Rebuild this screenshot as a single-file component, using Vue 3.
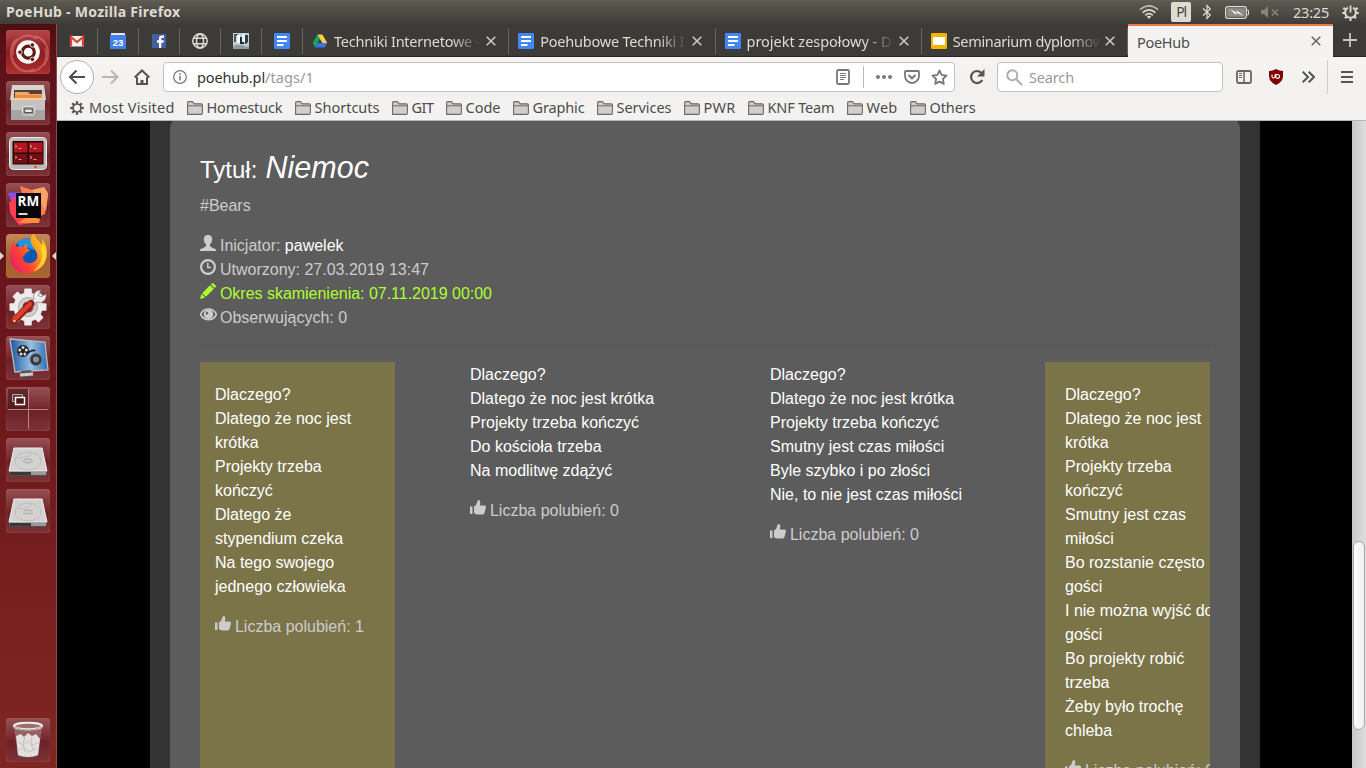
<script setup>
// Spreads a label's letters so that it takes the given width.
const vFit = {
  mounted(el, { value }) {
    const width = el.getBoundingClientRect().width
    el.style.letterSpacing = (value - width) / el.textContent.length + 'px'
  },
}

const pinned = ['gmail', 'calendar', 'facebook', 'globe', 'photo', 'docs']
const tabs = [
  { icon: 'drive', title: 'Techniki Internetowe -', width: 146 },
  { icon: 'docs', title: 'Poehubowe Techniki I', width: 144 },
  { icon: 'docs', title: 'projekt zespołowy - D', width: 145 },
  { icon: 'slides', title: 'Seminarium dyplomow', width: 151 },
]
const bookmarks = [
  { name: 'Homestuck', width: 76 },
  { name: 'Shortcuts', width: 65 },
  { name: 'GIT', width: 22 },
  { name: 'Code', width: 35 },
  { name: 'Graphic', width: 52 },
  { name: 'Services', width: 55 },
  { name: 'PWR', width: 32 },
  { name: 'KNF Team', width: 67 },
  { name: 'Web', width: 31 },
  { name: 'Others', width: 46 },
]
const launcher = ['dash', 'files', 'terminal', 'rubymine', 'firefox', 'settings', 'display', 'workspaces', 'disk', 'disk']
const poems = [
  {
    kind: 'first',
    lines: ['Dlaczego?', 'Dlatego że noc jest', 'krótka', 'Projekty trzeba', 'kończyć', 'Dlatego że', 'stypendium czeka', 'Na tego swojego', 'jednego człowieka'],
    likes: 1,
  },
  {
    kind: 'second',
    lines: ['Dlaczego?', 'Dlatego że noc jest krótka', 'Projekty trzeba kończyć', 'Do kościoła trzeba', 'Na modlitwę zdążyć'],
    likes: 0,
  },
  {
    kind: 'third',
    lines: ['Dlaczego?', 'Dlatego że noc jest krótka', 'Projekty trzeba kończyć', 'Smutny jest czas miłości', 'Byle szybko i po złości', 'Nie, to nie jest czas miłości'],
    likes: 0,
  },
  {
    kind: 'fourth',
    lines: ['Dlaczego?', 'Dlatego że noc jest', 'krótka', 'Projekty trzeba', 'kończyć', 'Smutny jest czas', 'miłości', 'Bo rozstanie często', 'gości', 'I nie można wyjść do', 'gości', 'Bo projekty robić', 'trzeba', 'Żeby było trochę', 'chleba'],
    likes: 0,
  },
]
const angles = [0, 45, 90, 135, 180, 225, 270, 315]
</script>

<template>
  <div class="desktop">
    <header class="panel">
      <b v-fit="174.5" class="window-title">PoeHub - Mozilla Firefox</b>
      <div class="indicators">
        <svg class="wifi" width="20" height="16" viewBox="0 0 20 16" fill="none" stroke="#dfdbd2" stroke-width="1.7">
          <path d="M1 5.6Q10-1.8 19 5.6" opacity=".75" /><path d="M3.6 8.6Q10 3 16.4 8.6" /><path d="M6.2 11.4Q10 8 13.8 11.4" />
          <path d="M7.8 12.5Q10 11 12.2 12.5L10 15z" fill="#dfdbd2" stroke="none" />
        </svg>
        <span class="layout"><span v-fit="9.5">Pl</span></span>
        <svg class="bluetooth" width="10" height="16" viewBox="0 0 10 16" fill="none" stroke="#dfdbd2" stroke-width="1.2"><path d="M1 4.5L8.3 11 5 14.5V1.5L8.3 5 1 11.5" /></svg>
        <svg class="battery" width="24" height="13" viewBox="0 0 24 13">
          <rect x=".7" y=".7" width="20.6" height="11.6" rx="1.8" fill="none" stroke="#dfdbd2" stroke-width="1.3" />
          <rect x="2.2" y="2.2" width="17.6" height="8.6" fill="#8f8d86" /><path d="M22 4.2h1.5v4.6H22" fill="none" stroke="#dfdbd2" />
          <path d="M5 3l6.5 3.8.5-2.2 6.5 5.4-7-3.3-.8 2z" fill="#fff" />
        </svg>
        <svg class="volume" width="18" height="12" viewBox="0 0 18 12"><path d="M0 4h3l4-4v12L3 8H0z" fill="#85837b" /><path d="M11 3.5l6 6m0-6l-6 6" stroke="#85837b" stroke-width="1.5" /></svg>
        <span v-fit="36" class="clock">23:25</span>
        <svg class="power" width="17" height="17" viewBox="0 0 17 17" fill="none" stroke="#dfdbd2">
          <path d="M5.9 3.6A5.4 5.4 0 1 0 11.1 3.6" stroke-width="2" /><path d="M8.5 1.5v7" stroke-width="1.8" />
          <path d="M3 5.5L1.4 3.8M14 5.5l1.6-1.7M3 9H.3M14 9h2.7M4.6 12.5L3 14.4M12.4 12.5l1.6 1.9M8.5 14.5v2.4" stroke-width="2" />
        </svg>
      </div>
    </header>

    <div class="workspace">
      <nav class="launcher">
        <div v-for="(app, i) in launcher" :key="i" class="tile" :class="app">
          <svg v-if="app === 'dash'" width="44" height="44" viewBox="0 0 44 44" fill="none">
            <path d="M7 25C5 10 20 0 31 9M14 39C3 31 2 16 11 9M28 39C16 47 1 33 6 19M39 19c5 13-6 24-17 22M29 6c14 4 16 19 9 29" stroke="#ffb3a8" stroke-opacity=".35" stroke-width="2" />
            <circle cx="22" cy="22" r="11.8" fill="#fff" /><circle cx="22.3" cy="22.2" r="6" stroke="#5e1715" stroke-width="3.2" />
            <g fill="#5e1715" stroke="#fff" stroke-width=".8"><circle cx="14" cy="22.2" r="2.2" /><circle cx="26.4" cy="15" r="2.2" /><circle cx="26.4" cy="29.4" r="2.2" /></g>
          </svg>
          <svg v-else-if="app === 'files'" width="44" height="44" viewBox="0 0 44 44">
            <path d="M6 4h32l2 15H4z" fill="#d5d3d0" /><path d="M8 9h28v11H8z" fill="#5c4036" /><path d="M9 11h13l2 2h12v7H9z" fill="#f0a868" /><path d="M9 14h27v5H9z" fill="#ed8c3a" /><path d="M7 18h30" stroke="#f5cda2" stroke-width="2" />
            <path d="M5 19h34v20H5z" fill="#a6a4a1" /><path d="M5 19h34v10H5z" fill="#c5c3c0" /><rect x="16.5" y="25.5" width="12" height="8.500" rx="1.5" fill="#999" stroke="#e3e3e3" /><rect x="18.800" y="28" width="7.400" height="3.500" fill="#eee" stroke="#555" />
          </svg>
          <svg v-else-if="app === 'terminal'" width="44" height="44" viewBox="0 0 44 44">
            <rect x="3.500" y="5.500" width="37" height="32" rx="4" fill="#bbb9b6" stroke="#eee" /><rect x="6.500" y="9" width="31" height="23.500" rx="1" fill="#250505" />
            <path d="M8 10.500h13.500v10H8zM23 10.500h13.500v10H23z" fill="#b31620" /><path d="M8 22h13.500v9.500H8zM23 22h13.500v9.500H23z" fill="#741014" />
            <path d="M9 13l2 1.500-2 1m3.500 1h3M24 13l2 1.500-2 1m3.500 1h3M9 24l2 1.500-2 1m3.500 1h3M24 24l2 1.500-2 1m3.500 1h3" stroke="#ffb8b8" stroke-width=".8" fill="none" /><circle cx="29.500" cy="35" r="1.200" fill="#f33" />
          </svg>
          <svg v-else-if="app === 'rubymine'" width="44" height="44" viewBox="0 0 44 44">
            <path d="M14 3l12 4 12-3 4 9-3 18-16 7z" fill="#ff7e4a" /><path d="M26 7l12-3 4 6-2 18z" fill="#fda06a" /><path d="M2 10l12-1 4 24-8-3z" fill="#8a4dea" /><path d="M3 20l8-8v18l22 9-20 3-9-12z" fill="#ff3e55" /><path d="M12 40l10-7 12 3-1 4z" fill="#ff8b38" />
            <path d="M10 10h25v25H10z" fill="#080408" /><path d="M12.500 31h9" stroke="#fff" stroke-width="1.700" /><text x="11.500" y="23" class="rm">RM</text>
          </svg>
          <svg v-else-if="app === 'firefox'" width="44" height="44" viewBox="0 0 44 44">
            <defs><linearGradient id="fox" x1="1" y1="0" x2="0" y2=".7"><stop offset="0" stop-color="#ffe226" /><stop offset=".4" stop-color="#ff9a1f" /><stop offset=".7" stop-color="#ff452f" /><stop offset="1" stop-color="#ea2460" /></linearGradient></defs>
            <circle cx="21.500" cy="18" r="13.500" fill="#0b55b5" /><path d="M12 8c6-5 14-4 18 1l-2 7-10-4-5 1z" fill="#1b95e8" />
            <path d="M8 7c0 3 1 5 3 6 2-1 4-1 6 0 1-2 3-3 5-3-1 2-2 4 0 5l2 1c-1 2-4 2-5 4-.5 2-2 2-2 4 0 5 7 7 12 3 5-5 1-10-2-14-4-6-3-10 1-14 1 6 5 7 8 12 1-2 0-4 0-6 6 7 6 17 3 23C29 46 4 43 4 22c0-6 1-11 4-15z" fill="url(#fox)" />
            <path d="M28 3c1 6 5 7 7 12 3 9-1 17-8 22 9-2 14-9 13-18 0-4-2-7-4-10v6c-3-5-7-6-8-12z" fill="#ffe23b" opacity=".75" />
          </svg>
          <svg v-else-if="app === 'settings'" width="44" height="44" viewBox="0 0 44 44">
            <g fill="#ececec"><circle cx="22" cy="22" r="14.500" /><rect v-for="a in angles" :key="a" x="18.200" y="3.500" width="7.600" height="9" rx="1" :transform="`rotate(${a} 22 22)`" /></g>
            <circle cx="22" cy="22" r="9.500" fill="#d0cfce" stroke="#aaa" /><circle cx="22" cy="22" r="5.500" fill="#8d2b30" />
            <path d="M22 20l6-6c-2-5 2-9 7-9l-3 5 3 2 5-3c1 6-4 10-9 8l-5 6z" fill="#ececec" stroke="#777" stroke-width=".7" /><path d="M8 36L25 18.500" stroke="#8d1c13" stroke-width="7" stroke-linecap="round" /><path d="M8 35L24 19" stroke="#d9402f" stroke-width="4.500" stroke-linecap="round" /><circle cx="8.500" cy="36" r="1" fill="#fff" />
          </svg>
          <svg v-else-if="app === 'display'" width="44" height="44" viewBox="0 0 44 44">
            <defs><linearGradient id="screen" x1="0" y1="0" x2="1" y2="0"><stop offset="0" stop-color="#17569f" /><stop offset=".55" stop-color="#96bfe4" /><stop offset="1" stop-color="#2c6eb5" /></linearGradient></defs>
            <path d="M4 3l35 3 3 28-33 2z" fill="url(#screen)" stroke="#c2b8ba" stroke-width="1.300" /><path d="M15 35l10-1 1 4 4 2-16 2z" fill="#555" /><path d="M14 39l13-1" stroke="#ccc" stroke-width="3" />
            <circle cx="17" cy="15" r="6" fill="#222" /><g fill="#dedede"><circle cx="17" cy="11.500" r="1.500" /><circle cx="20.300" cy="14" r="1.500" /><circle cx="19" cy="18" r="1.500" /><circle cx="15" cy="18" r="1.500" /><circle cx="13.700" cy="14" r="1.500" /></g>
            <path d="M20 18q7-5 9-3" fill="none" stroke="#222" stroke-width="2" /><circle cx="30" cy="23.500" r="6" fill="#303840" stroke="#777" /><circle cx="30" cy="23.500" r="3" fill="#86919c" />
          </svg>
          <svg v-else-if="app === 'workspaces'" width="44" height="44" viewBox="0 0 44 44"><path d="M22.500 2v40M2 22.500h40" stroke="#b98388" /><path d="M2 2h20v20H2z" fill="#451015" opacity=".6" /><path d="M6.500 7.500h10v7h-10z" fill="#5d3338" stroke="#aaa" /><path d="M9.500 10.500h9v7h-9z" fill="#501418" stroke="#fff" stroke-width="1.400" /></svg>
          <svg v-else width="44" height="44" viewBox="0 0 44 44">
            <path d="M3 33l1-3h35l2 3-1 5H4z" fill="#666" /><path d="M8 10h28l5 23H3z" fill="#d3d2d1" stroke="#efefef" /><path d="M4 34h36v3.500H4z" fill="#38383a" /><path d="M25 34h15v3H25z" fill="#999" />
            <ellipse cx="22" cy="23" rx="13" ry="9" fill="none" stroke="#bdbdbd" /><ellipse cx="22" cy="23" rx="4.500" ry="2" fill="#ccc" stroke="#aaa" /><path d="M26 14q-2 6-14 6" fill="none" stroke="#bbb" />
          </svg>
          <template v-if="app === 'firefox'"><i class="arrow running"></i><i class="arrow focused"></i></template>
        </div>
        <div class="tile trash">
          <svg width="44" height="44" viewBox="0 0 44 44">
            <path d="M8 9h28l-4 29q-10 3-20 0z" fill="#cfb7b7" opacity=".35" /><path d="M10 18l5-2 3 3 4-4 4 3 4-2 4 5-2 16q-10 4-20 0z" fill="#e1e0df" /><path d="M12 24l5 3 5-4 4 4 6-2M13 32l5-2 5 4 7-3M19 19l-2 7 2 8M26 19l-1 7 3 6" fill="none" stroke="#c4c2c1" />
            <ellipse cx="22" cy="8" rx="14" ry="3.200" fill="#9c6e6c" stroke="#eeedeb" stroke-width="2" /><path d="M8 9q14 6 28 0" fill="none" stroke="#aaa" />
          </svg>
        </div>
      </nav>

      <main class="browser">
        <div class="tabbar">
          <div v-for="(icon, i) in pinned" :key="icon" class="pin" :class="{ edge: i === 0 }">
            <svg width="16" height="16" viewBox="0 0 16 16">
              <template v-if="icon === 'gmail'"><path d="M1 3h14v10.500H1z" fill="#f1f1f1" /><path d="M2 13.500V4l6 5 6-5v9.500" fill="none" stroke="#dc4438" stroke-width="2.200" /></template>
              <template v-else-if="icon === 'calendar'"><path d="M1 0h14v5H1z" fill="#e5e5e5" /><path d="M0 2h16v14H0z" fill="#427fed" /><text x="8" y="12.700" class="date">23</text></template>
              <template v-else-if="icon === 'facebook'"><path d="M1 1h14v14H1z" fill="#4460a0" /><path d="M10.300 15V9.700h2.400V7.300h-2.400V5.800q0-1 1.200-1H13V2.500h-2.200Q8 2.500 8 5.300v2H6v2.400h2V15z" fill="#fff" /></template>
              <g v-else-if="icon === 'globe'" fill="none" stroke="#dedbd3" stroke-width="1.500"><circle cx="8" cy="8" r="7.200" /><ellipse cx="8" cy="8" rx="3.500" ry="7" /><path d="M1.500 5.200h13M1.500 10.800h13" /></g>
              <template v-else-if="icon === 'photo'"><path d="M0 0h16v16H0z" fill="#c5ced2" /><path d="M1 1h4v2H3v6H1z" fill="#4d5b65" /><path d="M4 2h3v8H4z" fill="#fff" /><path d="M7 4h2v5h2v2H7z" fill="#1c2b38" /><path d="M9 1h3v8H9z" fill="#eef2f4" /><path d="M12 2h3v7l-2 2h-1z" fill="#27404f" /><path d="M2 12h8l2 1.500h4V16H0v-2z" fill="#8d9ca4" /></template>
              <template v-else><rect width="16" height="16" rx="1.200" fill="#4387f5" /><path d="M3 4h10M3 8h10M3 12h6.500" stroke="#fff" stroke-width="1.800" /></template>
            </svg>
          </div>
          <div v-for="tab in tabs" :key="tab.title" class="tab">
            <svg class="favicon" width="16" height="16" viewBox="0 0 16 16">
              <template v-if="tab.icon === 'drive'"><path d="M5.300 1.500h5l5 8.500h-5z" fill="#ffcf48" /><path d="M5.300 1.500L7.800 6 3.200 14.500.700 10z" fill="#11a861" /><path d="M5.700 10h9.600l-2.500 4.500H3.200z" fill="#3777e3" /></template>
              <template v-else-if="tab.icon === 'docs'"><rect width="16" height="16" rx="1.200" fill="#4387f5" /><path d="M3 4h10M3 8h10M3 12h6.500" stroke="#fff" stroke-width="1.800" /></template>
              <template v-else><rect width="16" height="16" rx="1.200" fill="#f5b400" /><path d="M2 4h12v8H2z" fill="#fff" /></template>
            </svg>
            <span class="tab-title"><span v-fit="tab.width" class="label">{{ tab.title }}</span></span>
            <svg class="close" width="10" height="10" viewBox="0 0 10 10"><path d="M.7.7l8.600 8.600m0-8.600L.7 9.300" stroke="#d0cdc5" stroke-width="1.500" /></svg>
          </div>
          <div class="tab active">
            <span class="tab-title"><span v-fit="52.500" class="label">PoeHub</span></span>
            <svg class="close" width="10" height="10" viewBox="0 0 10 10"><path d="M.7.7l8.600 8.600m0-8.600L.7 9.300" stroke="#66635f" stroke-width="1.500" /></svg>
          </div>
          <svg class="newtab" width="14" height="14" viewBox="0 0 14 14"><path d="M7 0v14M0 7h14" stroke="#c9c6be" stroke-width="1.800" /></svg>
        </div>

        <div class="toolbar">
          <div class="back"><svg width="18" height="16" viewBox="0 0 18 16" fill="none" stroke="#4c4c4c" stroke-width="2"><path d="M8.500 1.500L2 8l6.500 6.500M2 8h15" /></svg></div>
          <svg class="forward" width="17" height="16" viewBox="0 0 17 16" fill="none" stroke="#b8b7b5" stroke-width="2"><path d="M9 1.500L15.500 8 9 14.500M15.500 8H0" /></svg>
          <svg class="home" width="16" height="16" viewBox="0 0 16 16" fill="none" stroke="#555" stroke-width="2"><path d="M.7 8.500L8 1.500l7.300 7M3 8v7h10V8" /><path d="M8 15v-4" stroke-width="3" /></svg>
          <div class="field url">
            <svg width="14" height="14" viewBox="0 0 14 14" fill="none" stroke="#777"><circle cx="7" cy="7" r="6.300" stroke-width="1.200" /><path d="M7 6v4.500M7 3.200v1.500" stroke-width="1.500" /></svg>
            <span class="address"><span v-fit="68" class="label host">poehub.pl</span><span v-fit="49" class="label path">/tags/1</span></span>
            <svg class="reader" width="14" height="16" viewBox="0 0 14 16" fill="none" stroke="#777"><rect x="1" y="1" width="12" height="14" rx="1.500" stroke-width="1.800" /><path d="M4 4.500h6M4 6.500h6M4 8.500h6M4 10.500h4" /></svg>
            <i class="divider"></i>
            <svg class="dots" width="16" height="4" viewBox="0 0 16 4" fill="#777"><circle cx="2" cy="2" r="2" /><circle cx="8" cy="2" r="2" /><circle cx="14" cy="2" r="2" /></svg>
            <svg class="pocket" width="16" height="14" viewBox="0 0 16 14" fill="none" stroke="#777"><path d="M2 1h12q1 0 1 1v4a7 7 0 0 1-14 0V2q0-1 1-1z" stroke-width="1.800" /><path d="M4.500 5L8 8.300 11.500 5" stroke-width="2" /></svg>
            <svg class="star" width="17" height="16" viewBox="0 0 17 16"><path d="M8.500 1.500l2.100 4.400 4.900.7-3.600 3.400.9 4.900-4.300-2.400-4.300 2.400.9-4.900L1.500 6.600l4.900-.7z" fill="none" stroke="#777" stroke-width="1.800" stroke-linejoin="round" /></svg>
          </div>
          <svg class="reload" width="16" height="16" viewBox="0 0 16 16"><path d="M13.300 11A6 6 0 1 1 12.800 4.300" fill="none" stroke="#555" stroke-width="2.200" /><path d="M15.500 0v7.500H8z" fill="#555" /></svg>
          <div class="field search">
            <svg width="17" height="17" viewBox="0 0 17 17" fill="none" stroke="#aaa" stroke-width="1.900"><circle cx="6.300" cy="6.300" r="5" /><path d="M10 10l6 6" /></svg>
            <span v-fit="45" class="label">Search</span>
          </div>
          <svg class="sidebar" width="16" height="14" viewBox="0 0 16 14" fill="none" stroke="#666"><rect x="1" y="1" width="14" height="12" rx="1.500" stroke-width="1.800" /><path d="M8 1v12" stroke-width="1.500" /><path d="M3 3.500h3M3 5.500h3M3 7.500h3" /></svg>
          <svg class="shield" width="14" height="16" viewBox="0 0 14 16"><path d="M7 0q3 2 7 2v5q0 6-7 9-7-3-7-9V2q4 0 7-2z" fill="#800000" /><path d="M3 5.500v2.300q0 1.200 1.500 1.200T6 7.800V5.500M7 9V5.500h1.500Q11 6 10.500 8T7 9" fill="none" stroke="#fff" stroke-width="1.100" /></svg>
          <svg class="more" width="13" height="12" viewBox="0 0 13 12" fill="none" stroke="#555" stroke-width="2"><path d="M.7.7L6 6 .7 11.300M6.700.7L12 6l-5.300 5.300" /></svg>
          <div class="menu"><svg width="12" height="12" viewBox="0 0 12 12"><path d="M0 1h12M0 6h12M0 11h12" stroke="#555" stroke-width="1.800" /></svg></div>
        </div>

        <div class="bookmarks">
          <svg class="gear" width="14" height="14" viewBox="0 0 14 14" stroke="#555" stroke-width="2.200"><circle cx="7" cy="7" r="4" fill="none" stroke-width="1.700" /><path v-for="a in angles" :key="a" d="M7 .2v2.500" :transform="`rotate(${a} 7 7)`" /></svg>
          <span v-fit="85.500" class="label visited">Most Visited</span>
          <div v-for="b in bookmarks" :key="b.name" class="bookmark">
            <svg width="16" height="14" viewBox="0 0 16 14"><path d="M.6 13.400V1.700q0-1.100 1.100-1.100h3.600l2 2.300h7q1.100 0 1.100 1.100v8.300q0 1.100-1.100 1.100z" fill="#d0cfcd" stroke="#6b6a68" stroke-width="1.100" /><path d="M1 4.800h14" stroke="#6b6a68" /></svg>
            <span class="bookmark-name" :style="{ width: b.width + 'px' }"><span v-fit="b.width" class="label">{{ b.name }}</span></span>
          </div>
        </div>

        <div class="viewport">
          <div class="page">
            <div class="container">
              <article class="card">
                <h3>Tytuł: <em>Niemoc</em></h3>
                <p class="tag">#Bears</p>
                <ul class="details">
                  <li><svg class="glyph" viewBox="0 0 16 16"><path d="M8 0c-3 0-4.300 2-4.200 4.500.1 2 .8 3.500 2.200 5v1.300c0 .6-.4.900-1 1.200L.8 14q-.8.500-.8 1.100V16h16v-.9q0-.6-.8-1.100L11 12c-.6-.3-1-.6-1-1.200V9.500c1.400-1.500 2.100-3 2.200-5C12.300 2 11 0 8 0z" /></svg> Inicjator: <b>pawelek</b></li>
                  <li><svg class="glyph" viewBox="0 0 16 16"><circle cx="8" cy="8" r="6.900" fill="none" stroke="currentColor" stroke-width="2.200" /><path d="M7.800 3.800V8.500H11" fill="none" stroke="currentColor" stroke-width="1.500" /></svg> Utworzony: 27.03.2019 13:47</li>
                  <li class="green"><svg class="glyph" viewBox="0 0 16 16"><path d="M0 16l1.500-5 3.600 3.500zM2.200 10.200l8-8 3.600 3.600-8 8zM11 1.400L12 .4q.8-.7 1.600.1l2 2q.8.700.1 1.500l-1.100 1z" /></svg> Okres skamienienia: 07.11.2019 00:00</li>
                  <li><svg class="glyph eye" viewBox="0 0 17 16"><path d="M.5 7.300C4 .2 13 .2 16.500 7.300 13 14.300 4 14.300.5 7.300z" fill="none" stroke="currentColor" stroke-width="1.700" /><path d="M8.500 2.500A4.700 4.700 0 1 1 8.490 2.500zM7 4.300q-2 1.800-.5 3.800l2-1.500z" fill-rule="evenodd" /></svg> Obserwujących: 0</li>
                </ul>
                <hr />
                <div class="carousel">
                  <section v-for="p in poems" :key="p.kind" class="poem" :class="p.kind">
                    <p v-for="(line, i) in p.lines" :key="i">{{ line }}</p>
                    <p class="likes"><svg class="glyph" viewBox="0 0 16 16"><path d="M0 6.500h2.500V14H0zM4 6.500q2.500-1 3-4Q7.300 0 8.800 0c1.600 0 1.700 1.700 1.200 4.500L9.800 5.500h4.400c1.500 0 2 1 1.700 2.200l-1.400 5c-.3 1-1 1.800-2.200 1.800H7.500Q6 14.500 4 13z" /></svg> Liczba polubień: {{ p.likes }}</p>
                  </section>
                </div>
              </article>
            </div>
          </div>
          <div class="scrollbar"><div class="thumb"></div></div>
        </div>
      </main>
    </div>
  </div>
</template>

<style>
body { margin: 0; overflow: hidden; }
</style>

<style scoped>
* { box-sizing: border-box; }
svg { display: block; flex: none; }
.desktop { width: 1366px; height: 768px; overflow: hidden; display: flex; flex-direction: column; background: #000; font: 14.500px/20px "Noto Sans", sans-serif; color: #4c4c4c; }
.label { display: inline-block; white-space: nowrap; }

.panel { height: 24px; flex: none; display: flex; justify-content: space-between; align-items: center; padding: 0 7px 0 6px; background: linear-gradient(#626054 0, #59574e 3px, #3e3d39 24px); color: #dfdbd2; }
.window-title { font-size: 14px; line-height: 24px; white-space: nowrap; }
.indicators { display: flex; align-items: center; height: 24px; }
.layout { width: 20px; height: 20px; margin-left: 12px; border-radius: 2px; background: #dfdbd2; color: #45443f; font: 14px/20px "Noto Sans", sans-serif; display: flex; justify-content: center; }
.bluetooth { margin-left: 11px; }
.battery { margin-left: 13px; }
.volume { margin-left: 12px; }
.clock { margin-left: 14px; display: inline-block; font-size: 14.500px; line-height: 22px; }
.power { margin-left: 13px; }

.workspace { flex: 1; display: flex; min-height: 0; }
.launcher { width: 57px; flex: none; display: flex; flex-direction: column; align-items: flex-start; gap: 7px; padding: 6px 0 6px 6px; border-right: 1px solid #8f4a48; background: linear-gradient(#4d0e12, #5d1219 5%, #6c161c 45%, #7e2722); }
.tile { position: relative; width: 44px; height: 44px; flex: none; border-radius: 4px; background: linear-gradient(#955056, #74282c 48%, #6b2025 52%, #7c3338); box-shadow: inset 0 0 1px #d09090; }
.dash { background: linear-gradient(#b4474a, #8e1b20 50%, #ac302e); }
.firefox { background: linear-gradient(#c48858, #a36336 50%, #a9642f); }
.trash { margin-top: auto; }
.rm { font: bold 13.500px "Open Sans", sans-serif; fill: #fff; }
.date { font: bold 9.500px "Liberation Sans", sans-serif; fill: #fff; text-anchor: middle; }
.arrow { position: absolute; top: 18px; border: 4px solid transparent; }
.running { left: -6px; border-left: 4px solid #e0d5d5; border-right: 0; }
.focused { right: -6px; border-right: 4px solid #e0d5d5; border-left: 0; }

.browser { flex: 1; min-width: 0; display: flex; flex-direction: column; background: #f3f2f0; }
.tabbar { height: 33px; flex: none; display: flex; background: #3c3b37; border-bottom: 1px solid #262523; color: #dfdbd2; }
.pin { width: 41px; height: 32px; display: flex; align-items: center; justify-content: center; border-right: 1px solid transparent; border-image: linear-gradient(transparent 5px, #66655f 5px, #66655f 29px, transparent 29px) 1; flex: none; padding-top: 2px; }
.edge { padding-right: 1px; }
.tab { width: 206.250px; height: 32px; flex: none; display: flex; align-items: center; padding: 2px 0 0 9px; border-right: 1px solid transparent; border-image: linear-gradient(transparent 5px, #66655f 5px, #66655f 29px, transparent 29px) 1; }
.tab-title { width: 146px; margin-left: 6px; overflow: hidden; white-space: nowrap; mask-image: linear-gradient(to right, #000 118px, transparent 148px); }
.tab-title .label { margin-top: -1px; }
.close { margin-left: 6px; }
.active { width: 205px; height: 33px; padding: 0 0 0 9px; background: #f3f2f0; color: #4c4c4c; border: 0; border-top: 2px solid #f07746; }
.active .tab-title { mask-image: none; margin-left: 0; width: 168px; }
.active .close { margin-bottom: 2px; }
.newtab { margin: 9px 0 0 10px; }

.toolbar { height: 40px; flex: none; display: flex; align-items: center; padding-left: 3px; background: linear-gradient(#f5f4f2, #f1f0ee); }
.back { width: 34px; height: 34px; border: 1px solid #b2b0ad; border-radius: 50%; background: #fff; display: flex; align-items: center; justify-content: center; flex: none; }
.forward { margin-left: 8px; }
.home { margin-left: 15px; }
.field { height: 30px; display: flex; align-items: center; background: #fff; border: 1px solid #c5c2be; border-radius: 4px; flex: none; }
.url { width: 792px; margin-left: 13px; padding: 0 6px 0 9px; }
.address { margin-left: 10px; flex: 1; white-space: nowrap; }
.host { color: #333; }
.path { color: #999; }
.divider { width: 1px; height: 22px; margin: 0 12px 0 13px; background: #bbb; }
.pocket { margin-left: 12px; }
.star { margin-left: 11px; }
.reload { margin-left: 14px; }
.search { width: 226px; margin-left: 12px; padding-left: 8px; color: #999; }
.search .label { margin-left: 6px; }
.sidebar { margin-left: 13px; }
.shield { margin-left: 17px; }
.more { margin-left: 19px; }
.menu { display: flex; align-items: center; height: 34px; margin-left: 12px; padding-left: 13px; border-left: 1px solid #d0cecb; }

.bookmarks { height: 24px; flex: none; display: flex; align-items: center; padding: 0 0 1px 13px; border-bottom: 1px solid #b9b7b4; background: #f3f2f0; white-space: nowrap; }
.visited { margin: 0 12px 0 5px; padding-bottom: 2px; }
.bookmark { display: flex; align-items: center; margin-right: 12px; }
.bookmark-name { margin-left: 4px; padding-bottom: 2px; }

.viewport { flex: 1; min-height: 0; display: flex; background: #000; overflow: hidden; }
.page { flex: 1; min-width: 0; padding-left: 93px; }
.container { display: flow-root; width: 1110px; height: 100%; padding: 0 20px; background: #333; }
.card { height: 660px; margin-top: -3px; padding: 33px 30px 0; border-radius: 10px; background: #5c5c5c; color: #ccc; font: 16px/24px "Liberation Sans", sans-serif; }
h3 { margin: 0; height: 43px; font-size: 24px; line-height: 32px; font-weight: 400; color: #fff; }
em { font-size: 30.500px; margin-left: 1.500px; }
p { margin: 0; white-space: nowrap; }
.details { list-style: none; margin: 16px 0 0; padding: 0; }
.details b { color: #fff; font-weight: 400; }
.glyph { display: inline-block; width: 16px; height: 16px; margin-right: -.5px; fill: currentColor; vertical-align: baseline; }
.eye { width: 17px; margin-right: -1.500px; }
.green { color: #adff2f; letter-spacing: -.02px; }
hr { margin: 15px 0 16px; border: 0; border-top: 1px solid #515151; }
.carousel { display: flex; width: 1010px; height: 420px; overflow: hidden; }
.poem { flex: none; padding-top: 1px; color: #fff; }
.first, .fourth { width: 195px; padding: 21px 15px 0; background: #7b7449; }
.second { width: 300px; margin-left: 75px; }
.third { width: 275px; }
.fourth { padding-left: 20px; }
.likes { margin-top: 16px; color: #ccc; }
.scrollbar { width: 14px; flex: none; padding: 420px 1px 0; background: linear-gradient(to right, #c8c8c8, #dedede); }
.thumb { height: 189px; border: 1px solid #aaa; border-radius: 6px; background: linear-gradient(to right, #fff, #eee); }
</style>
